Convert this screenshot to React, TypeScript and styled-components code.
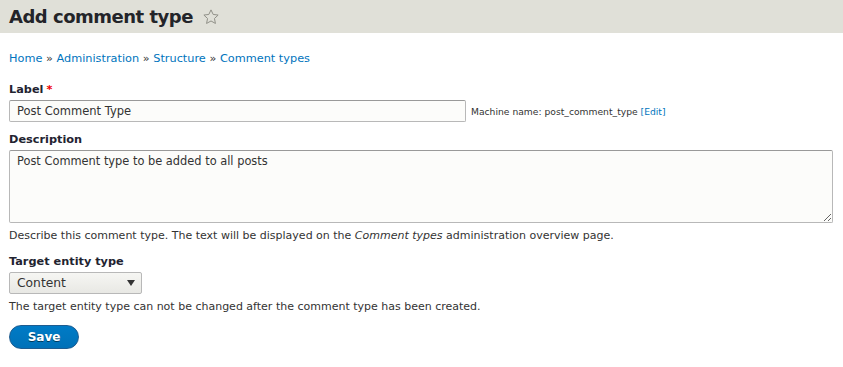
import React, { FC, useState } from "react";
import styled, { createGlobalStyle } from "styled-components";

const GlobalStyle = createGlobalStyle`
  html, body {
    margin: 0;
    padding: 0;
    background: #fff;
    color: #222330;
    font-family: "DejaVu Sans", "Liberation Sans", sans-serif;
    font-size: 12px;
  }
`;

const Header = styled.header`
  display: flex;
  align-items: center;
  gap: 9px;
  height: 33px;
  padding: 0 9px;
  background: #e0e0d8;
`;

const Title = styled.h1`
  margin: 0;
  font-size: 18px;
  letter-spacing: -0.5px;
  font-weight: bold;
  color: #232429;
`;

const Page = styled.main`
  display: flex;
  flex-direction: column;
  padding: 19px 9px 0;
`;

const Breadcrumb = styled.nav`
  font-size: 11.3px;
  color: #0074bd;
  margin-bottom: 18px;

  span {
    color: #333;
  }
`;

const Field = styled.div<{ $gap?: number }>`
  display: flex;
  flex-direction: column;
  margin-bottom: ${p => p.$gap ?? 9}px;
`;

const Label = styled.label`
  font-weight: bold;
  font-size: 11.3px;
  margin-bottom: 4px;

  span {
    color: #e00;
    margin-left: 3px;
  }
`;

const Row = styled.div`
  display: flex;
  align-items: center;
  gap: 5px;
`;

const TextInput = styled.input`
  width: 457px;
  height: 22px;
  box-sizing: border-box;
  padding: 0 7px;
  border: 1px solid #b8b8b8;
  border-top-color: #999;
  border-radius: 2px;
  background: #fcfcfa;
  font: inherit;
  font-size: 11.5px;
  color: #333;
`;

const Machine = styled.span`
  font-size: 9.2px;
  color: #333;

  a {
    color: #0074bd;
    text-decoration: none;
  }
`;

const TextArea = styled.textarea`
  width: 824px;
  height: 73px;
  box-sizing: border-box;
  padding: 3px 7px;
  border: 1px solid #b8b8b8;
  border-top-color: #999;
  border-radius: 2px;
  background: #fcfcfa;
  font: inherit;
  font-size: 11.4px;
  color: #333;
  resize: vertical;
`;

const Help = styled.div`
  font-size: 11px;
  color: #333;
  margin-top: 6px;
`;

const Select = styled.div`
  display: flex;
  align-items: center;
  justify-content: space-between;
  width: 133px;
  height: 22px;
  box-sizing: border-box;
  padding: 0 6px 0 7px;
  border: 1px solid #b8b8b8;
  border-radius: 2px;
  background: linear-gradient(#f6f6f3, #e8e8e4);
  font-size: 12.3px;
  color: #333;
`;

const Arrow = styled.span`
  width: 0;
  height: 0;
  border-left: 4px solid transparent;
  border-right: 4px solid transparent;
  border-top: 6px solid #333;
`;

const SaveButton = styled.button`
  align-self: flex-start;
  width: 70px;
  height: 24px;
  margin-top: 3px;
  border: 1px solid #1e5c90;
  border-radius: 20px;
  background: linear-gradient(#007bc6, #0071b8);
  color: #fff;
  font: inherit;
  font-size: 12px;
  font-weight: bold;
  text-shadow: 0 1px rgba(0, 0, 0, 0.5);
  cursor: pointer;
`;

const Star = () => (
  <svg width="18" height="18" viewBox="0 0 24 24">
    <path
      d="M12 2.5l2.9 6.1 6.6.8-4.9 4.6 1.3 6.6L12 17.3l-5.9 3.3 1.3-6.6-4.9-4.6 6.6-.8z"
      fill="none"
      stroke="#8e8e86"
      strokeWidth="1.3"
      strokeLinejoin="round"
    />
  </svg>
);

const App: FC = () => {
  const [label, setLabel] = useState("Post Comment Type");
  const [desc, setDesc] = useState("Post Comment type to be added to all posts");

  return (
    <>
      <GlobalStyle />
      <Header>
        <Title>Add comment type</Title>
        <Star />
      </Header>
      <Page>
        <Breadcrumb>
          Home <span>»</span> Administration <span>»</span> Structure <span>»</span> Comment types
        </Breadcrumb>
        <Field $gap={11}>
          <Label>
            Label<span>*</span>
          </Label>
          <Row>
            <TextInput value={label} onChange={e => setLabel(e.target.value)} />
            <Machine>
              Machine name: post_comment_type <a href="#">[Edit]</a>
            </Machine>
          </Row>
        </Field>
        <Field $gap={13}>
          <Label>Description</Label>
          <TextArea value={desc} onChange={e => setDesc(e.target.value)} />
          <Help>
            Describe this comment type. The text will be displayed on the <em>Comment types</em> administration overview page.
          </Help>
        </Field>
        <Field>
          <Label>Target entity type</Label>
          <Select>
            Content
            <Arrow />
          </Select>
          <Help>The target entity type can not be changed after the comment type has been created.</Help>
        </Field>
        <SaveButton>Save</SaveButton>
      </Page>
    </>
  );
};

export default App;
